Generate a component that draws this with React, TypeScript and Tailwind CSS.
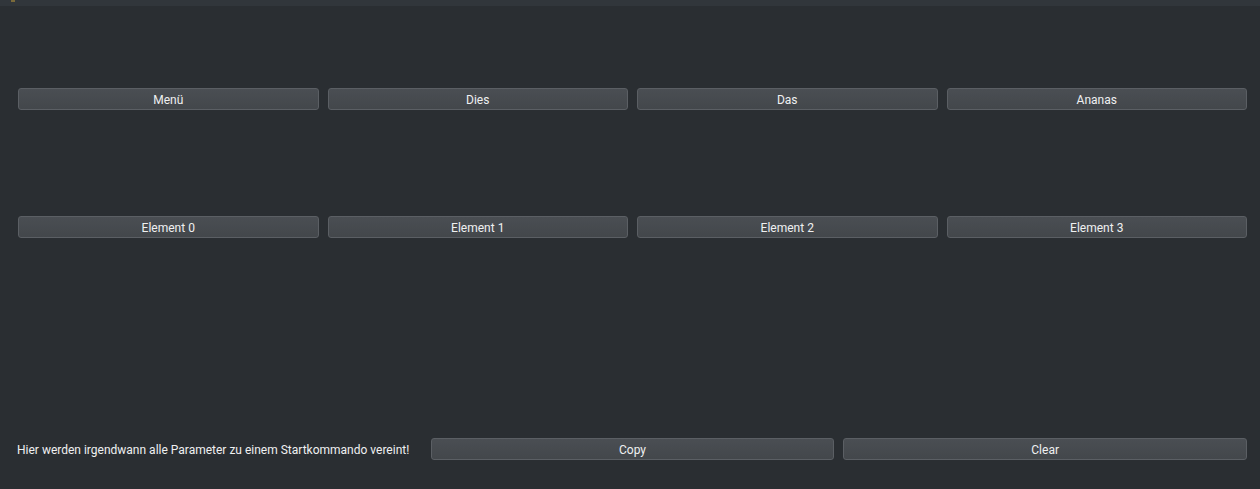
import React from "react";

const Btn: React.FC<{ label: string }> = ({ label }) => (
  <button className="h-[22px] w-full rounded-[3px] border border-[#5b5f64] bg-gradient-to-b from-[#4a4e53] to-[#43474b] pt-px text-[12px] leading-none text-[#eff0f1]">
    {label}
  </button>
);

export default function App() {
  const top = ["Menü", "Dies", "Das", "Ananas"];
  const elements = ["Element 0", "Element 1", "Element 2", "Element 3"];

  return (
    <div
      className="flex h-[489px] w-[1260px] flex-col overflow-hidden bg-[#2a2e32]"
      style={{ fontFamily: "Roboto, 'Liberation Sans', sans-serif" }}
    >
      <div className="relative h-[6px] bg-[#31363b]">
        <div className="absolute left-[11px] top-0 h-[2px] w-[4px] bg-[#7a6a3a]" />
      </div>

      <div className="flex flex-1 flex-col pl-[18px] pr-[13px]">
        <div className="mt-[82px] grid grid-cols-4 gap-[9px]">
          {top.map((t) => (
            <Btn key={t} label={t} />
          ))}
        </div>

        <div className="mt-[106px] grid grid-cols-4 gap-[9px]">
          {elements.map((t) => (
            <Btn key={t} label={t} />
          ))}
        </div>

        <div className="mt-[200px] grid grid-cols-3 items-center gap-[9px]">
          <span className="-ml-px whitespace-nowrap pt-px text-[12px] text-[#eff0f1]">
            Hier werden irgendwann alle Parameter zu einem Startkommando vereint!
          </span>
          <Btn label="Copy" />
          <Btn label="Clear" />
        </div>
      </div>
    </div>
  );
}
